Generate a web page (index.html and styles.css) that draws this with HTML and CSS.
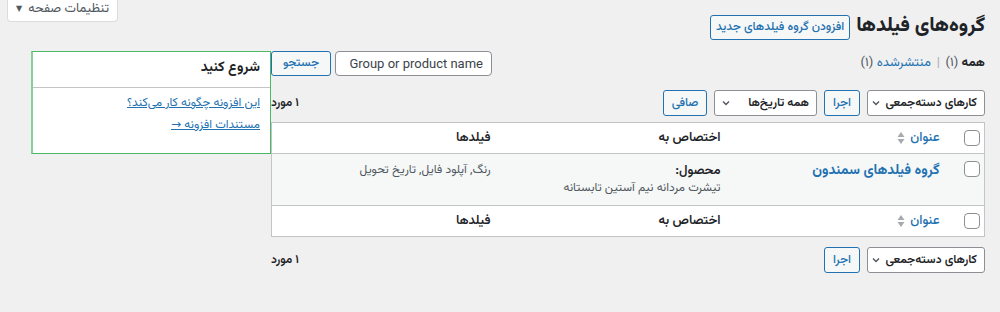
FILE: index.html
```html
<!DOCTYPE html>
<html lang="fa" dir="rtl">
<head>
<meta charset="utf-8">
<title>گروه‌های فیلدها</title>
<link rel="stylesheet" href="styles.css">
</head>
<body>
<div class="screen-tab">
  <button class="screen-btn">تنظیمات صفحه <span class="caret">▼</span></button>
</div>
<div class="wrap">
  <div class="title-row">
    <h1 class="title">گروه‌های فیلدها</h1>
    <a class="btn add-btn" href="#">افزودن گروه فیلدهای جدید</a>
  </div>
  <div class="columns">
    <div class="main">
      <div class="top-row">
        <ul class="subsubsub">
          <li><a class="current" href="#">همه <span class="count">(۱)</span></a> <span class="sep">|</span></li>
          <li><a href="#">منتشرشده <span class="count">(۱)</span></a></li>
        </ul>
        <div class="search">
          <input class="search-input" type="text" value="Group or product name">
          <button class="btn">جستجو</button>
        </div>
      </div>
      <div class="tablenav top">
        <div class="actions">
          <div class="select bulk"><span>کارهای دسته‌جمعی</span> <svg class="chev" viewBox="0 0 10 10" width="10" height="10"><path d="M2 3.5 L5 6.5 L8 3.5" fill="none" stroke="#50575e" stroke-width="1.4"/></svg></div>
          <button class="btn apply">اجرا</button>
          <div class="select dates"><span>همه تاریخ‌ها</span> <svg class="chev" viewBox="0 0 10 10" width="10" height="10"><path d="M2 3.5 L5 6.5 L8 3.5" fill="none" stroke="#50575e" stroke-width="1.4"/></svg></div>
          <button class="btn filter">صافی</button>
        </div>
        <span class="items">۱ مورد</span>
      </div>
      <table class="list">
        <thead>
          <tr>
            <td class="cb"><span class="checkbox"></span></td>
            <th class="col-title"><a href="#">عنوان</a> <span class="sort"><svg viewBox="0 0 8 14" width="8" height="14"><path d="M4 1 L7.5 6 L0.5 6 Z M4 13 L7.5 8 L0.5 8 Z" fill="#a7aaad"/></svg></span></th>
            <th class="col-assign">اختصاص به</th>
            <th class="col-fields">فیلدها</th>
          </tr>
        </thead>
        <tbody>
          <tr class="alt">
            <td class="cb"><span class="checkbox"></span></td>
            <td class="col-title"><a class="row-title" href="#">گروه فیلدهای سمندون</a></td>
            <td class="col-assign"><strong>محصول:</strong><br>تیشرت مردانه نیم آستین تابستانه</td>
            <td class="col-fields">رنگ, آپلود فایل, تاریخ تحویل</td>
          </tr>
        </tbody>
        <tfoot>
          <tr>
            <td class="cb"><span class="checkbox"></span></td>
            <th class="col-title"><a href="#">عنوان</a> <span class="sort"><svg viewBox="0 0 8 14" width="8" height="14"><path d="M4 1 L7.5 6 L0.5 6 Z M4 13 L7.5 8 L0.5 8 Z" fill="#a7aaad"/></svg></span></th>
            <th class="col-assign">اختصاص به</th>
            <th class="col-fields">فیلدها</th>
          </tr>
        </tfoot>
      </table>
      <div class="tablenav bottom">
        <div class="actions">
          <div class="select bulk"><span>کارهای دسته‌جمعی</span> <svg class="chev" viewBox="0 0 10 10" width="10" height="10"><path d="M2 3.5 L5 6.5 L8 3.5" fill="none" stroke="#50575e" stroke-width="1.4"/></svg></div>
          <button class="btn apply">اجرا</button>
        </div>
        <span class="items">۱ مورد</span>
      </div>
    </div>
    <aside class="sidebar">
      <div class="box">
        <h2 class="box-head">شروع کنید</h2>
        <div class="box-body">
          <a href="#">این افزونه چگونه کار می‌کند؟</a>
          <a href="#">مستندات افزونه →</a>
        </div>
      </div>
    </aside>
  </div>
</div>
</body>
</html>
```
FILE: styles.css
```css
* { box-sizing: border-box; }
html, body { margin: 0; padding: 0; }
body {
  background: #f0f0f1;
  color: #1d2327;
  font-family: "Vazirmatn", "Noto Sans Arabic", "DejaVu Sans", sans-serif;
  font-size: 13px;
  line-height: 1.4;
  width: 1000px;
  height: 312px;
  overflow: hidden;
}
a { color: #2271b1; text-decoration: none; }

.screen-tab {
  float: left;
  margin-left: 7px;
}
.screen-btn {
  font: inherit;
  font-size: 13px;
  color: #50575e;
  background: #fff;
  border: 1px solid #dcdcde;
  border-top: none;
  border-radius: 0 0 4px 4px;
  height: 22px;
  width: 111px;
  padding: 0 10px 2px;
  display: flex;
  align-items: center;
  justify-content: center;
  gap: 6px;
  white-space: nowrap;
}
.caret { font-size: 8px; }

.wrap {
  padding: 10px 15px 0 14px;
}
.title-row {
  display: flex;
  align-items: center;
  gap: 6px;
  height: 32px;
}
.title {
  margin: 0;
  font-size: 20px;
  font-weight: 800;
  line-height: 1.3;
  white-space: nowrap;
}
.btn {
  font: inherit;
  font-size: 12px;
  font-weight: 500;
  color: #2271b1;
  background: #f6f7f7;
  border: 1px solid #2271b1;
  border-radius: 3px;
  height: 25px;
  padding: 0 8px;
  display: inline-flex;
  align-items: center;
  justify-content: center;
  cursor: pointer;
  white-space: nowrap;
}
.add-btn { margin-top: 3px; width: 140px; padding: 0 4px; }

.columns {
  display: flex;
  margin-top: 9px;
}
.main { width: 714px; }
.sidebar { width: 240px; }

.top-row {
  display: flex;
  justify-content: space-between;
  align-items: center;
  height: 25px;
}
.subsubsub {
  list-style: none;
  margin: 0;
  padding: 0;
  display: flex;
  gap: 4px;
  color: #646970;
  white-space: nowrap;
}
.subsubsub a.current { color: #1d2327; font-weight: 700; }
.subsubsub .count { font-weight: 400; color: #50575e; }
.subsubsub .sep { color: #a7aaad; margin: 0 2px; }

.search { display: flex; gap: 4px; }
.search-input {
  font-family: Roboto, sans-serif;
  font-size: 13px;
  color: #3c434a;
  width: 157px;
  height: 25px;
  border: 1px solid #8c8f94;
  border-radius: 4px;
  background: #fff;
  padding: 0 8px;
  text-align: right;
  direction: ltr;
}
.search .btn { width: 60px; }

.tablenav {
  display: flex;
  justify-content: space-between;
  align-items: center;
  height: 26px;
}
.tablenav.top { margin-top: 14px; margin-bottom: 6px; }
.tablenav.bottom { margin-top: 10px; }
.actions { display: flex; gap: 7px; align-items: center; }
.items { font-size: 12px; font-weight: 600; }

.select {
  height: 26px;
  background: #fff;
  border: 1px solid #8c8f94;
  border-radius: 3px;
  display: flex;
  align-items: center;
  justify-content: space-between;
  padding: 0 7px 0 6px;
  font-size: 12px;
  font-weight: 600;
  white-space: nowrap;
  color: #1d2327;
  gap: 4px;
}
.select.bulk { width: 118px; }
.select.dates { width: 103px; }
.chev { flex: none; }
.actions .btn { height: 26px; }
.actions .btn.apply { width: 36px; }
.actions .btn.filter { width: 44px; }

.list {
  width: 100%;
  border-collapse: collapse;
  border: 1px solid #c3c4c7;
  background: #fff;
  table-layout: fixed;
}
.list th, .list td {
  text-align: right;
  vertical-align: top;
  font-weight: 400;
}
.list thead th, .list thead td { border-bottom: 1px solid #c3c4c7; }
.list tfoot th, .list tfoot td { border-top: 1px solid #c3c4c7; }
.list thead th, .list tfoot th {
  height: 31px;
  padding: 6px 10px;
  font-weight: 600;
  font-size: 13px;
}
.list .cb { width: 35px; padding: 7px 4px 0 0; }
.list .col-title { width: 221px; }
.list .col-assign { width: 230px; }
.list thead th.col-title a, .list tfoot th.col-title a { font-weight: 500; }
.list .col-fields { padding-right: 8px; }
.list th.col-assign { padding-right: 8px; }
.sort { display: inline-block; vertical-align: middle; margin-right: 2px; }
.sort svg { display: block; }

.checkbox {
  display: block;
  width: 16px;
  height: 16px;
  border: 1px solid #8c8f94;
  border-radius: 4px;
  background: #fff;
}
tbody tr.alt { background: #f6f7f7; }
tbody td { padding: 8px 10px; height: 51px; font-size: 12px; color: #50575e; }
tbody td.cb { padding: 10px 4px 0 0; }
tbody .col-assign strong { color: #1d2327; font-weight: 600; font-size: 13px; }
tbody td.col-assign { padding-right: 8px; }
.row-title { font-weight: 700; font-size: 14px; }

.box {
  background: #fff;
  border: 1px solid #4ab866;
  border-left: 2px solid #86cf96;
  height: 103px;
}
.box-head {
  margin: 0;
  font-size: 14px;
  font-weight: 700;
  height: 36px;
  line-height: 33px;
  padding: 0 10px;
  border-bottom: 1px solid #c3c4c7;
}
.box-body {
  padding: 4px 10px;
  display: flex;
  flex-direction: column;
  align-items: flex-start;
}
.box-body a {
  text-decoration: underline;
  font-size: 12px;
  line-height: 22px;
}
```
